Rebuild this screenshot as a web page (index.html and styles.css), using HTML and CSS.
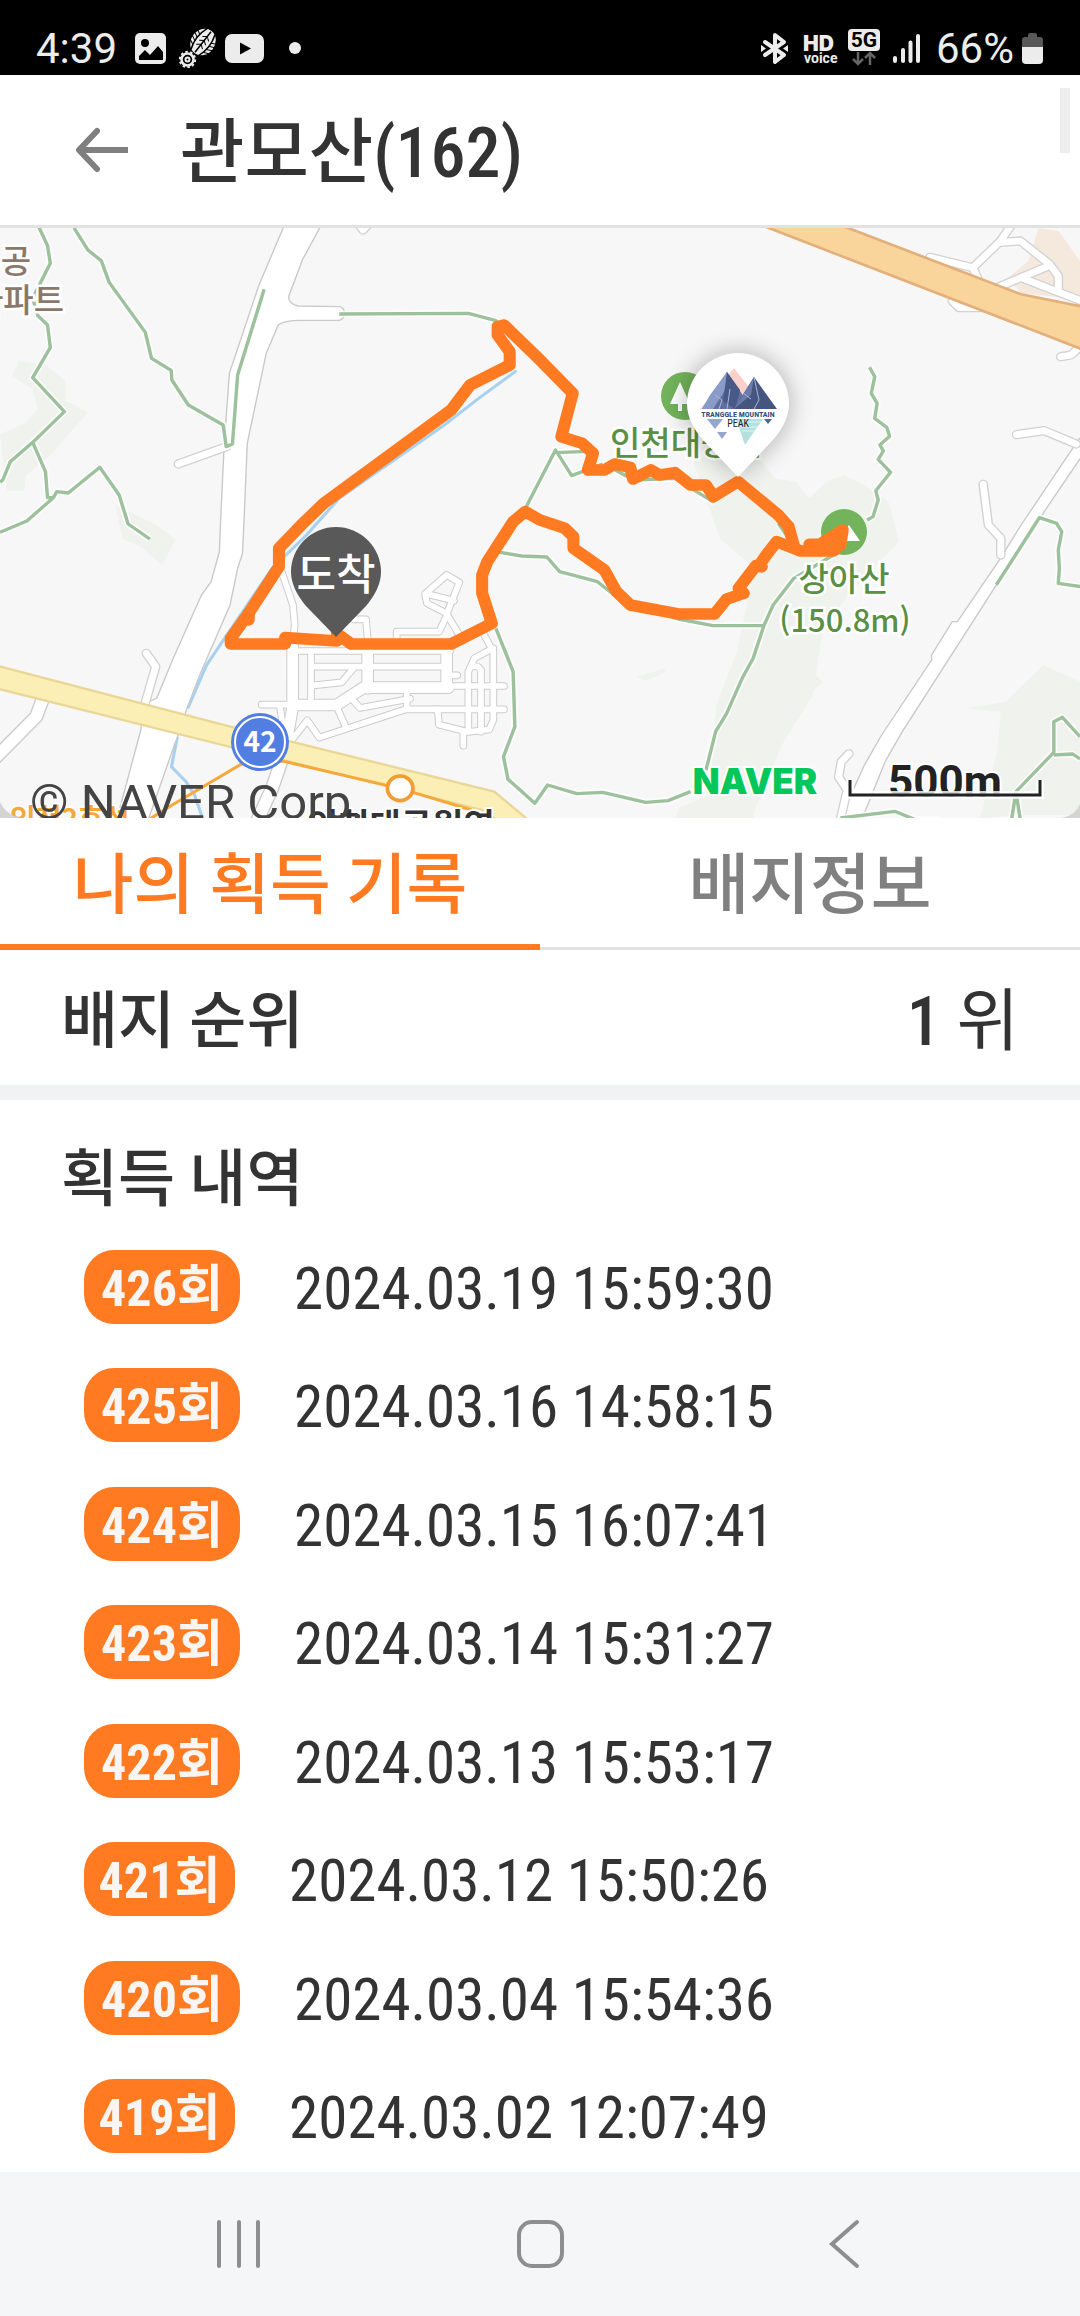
FILE: index.html
```html
<!DOCTYPE html>
<html lang="ko">
<head>
<meta charset="utf-8">
<meta name="viewport" content="width=device-width">
<title>관모산(162)</title>
<link rel="stylesheet" href="styles.css">
</head>
<body>
<div class="screen">
  <div class="status">
    <div class="status-side">
      <span class="status-text">4:39</span>
      <svg class="notices" width="170" height="40" viewBox="132 28 170 40">
        <rect x="136" y="33" width="31" height="31" rx="5" fill="#ececec"/>
        <circle cx="146" cy="43" r="4" fill="#000"/>
        <path d="M140 60v-4l6-6 5 5 8-9 5 6v8z" fill="#000"/>
        <g fill="none" stroke="#ececec">
          <circle cx="188.500" cy="59.500" r="6" stroke-width="2.500"/>
          <circle cx="188.500" cy="59.500" r="7.700" stroke-width="2" stroke-dasharray="2.500 2.340"/>
          <circle cx="188.500" cy="59.500" r="2" stroke-width="2"/>
        </g>
        <g transform="rotate(38 204 42)">
          <ellipse cx="204" cy="42" rx="12" ry="14" fill="#ececec"/>
          <path d="M199 29q-5 13 0 26M209 29q5 13 0 26M204 29v26" fill="none" stroke="#000" stroke-width="1.500"/>
          <path d="M191 35l6 3M191 39l6 3M191 43l6 3M191 47l6 3M217 35l-6 3M217 39l-6 3M217 43l-6 3M217 47l-6 3M200 38l4-3 4 3M200 43l4-3 4 3M200 48l4-3 4 3" fill="none" stroke="#000"/>
        </g>
        <rect x="226" y="34" width="39" height="29" rx="7" fill="#ececec"/>
        <path d="M241 42.500v12l11-6z" fill="#000"/>
        <circle cx="296" cy="48" r="6" fill="#ececec"/>
      </svg>
    </div>
    <div class="status-side">
      <svg class="signals" width="164" height="40" viewBox="754 28 164 40">
        <g fill="none" stroke="#ececec" stroke-width="4" stroke-linecap="round" stroke-linejoin="round">
          <path d="M761 42l19 13-9 7V35l9 7-19 13"/>
        </g>
        <path d="M757 45l5 3.500-5 3.500zM784 45l-5 3.500 5 3.500z" fill="#ececec"/>
        <text x="799" y="51" class="hd">HD</text>
        <text x="800" y="63" class="voice">voice</text>
        <rect x="844" y="29" width="32" height="22" rx="4" fill="#ececec"/>
        <text x="860" y="47" class="fiveg">5G</text>
        <path d="M854 52v12m-5-5l5 5 5-5M866 65V53m-5 5l5-5 5 5" fill="none" stroke="#666" stroke-width="2.500"/>
        <path d="M891 58v3M899 50v11M906.500 42.500V61M914 36v25" stroke="#ececec" stroke-width="4" stroke-linecap="round"/>
      </svg>
      <span class="status-text">66%</span>
      <svg class="battery" width="21" height="32" viewBox="0 0 21 32">
        <path d="M0 14V7q0-3 3-3h3V2q0-2 2-2h5q2 0 2 2v2h3q3 0 3 3v7z" fill="#585858"/>
        <path d="M0 14h21v13q0 4-4 4H4q-4 0-4-4z" fill="#ececec"/>
      </svg>
    </div>
  </div>

  <header class="header">
    <button class="back" aria-label="뒤로">
      <svg width="54" height="46" viewBox="0 0 54 46" fill="none" stroke="#7f7f7f" stroke-width="6">
        <path d="M3 23h50"/><path d="M22 4L4 23l18 19" stroke-linecap="round" stroke-linejoin="round"/>
      </svg>
    </button>
    <h1>관모산(162)</h1>
    <i class="scroll-thumb"></i>
  </header>

  <svg class="map" viewBox="0 228 1080 590" preserveAspectRatio="xMidYMid slice">
    <defs>
      <filter id="shadow" x="-60%" y="-60%" width="220%" height="220%"><feGaussianBlur stdDeviation="13"/></filter>
      <path id="avenues" d="M218 260V440L200 545M215 435H350L430 383H685M443 265V385M680 265V378"/>
      <g id="streets">
        <path d="M218 273H690M273 275V430M273 320H680M273 377l92-10 38-45"/>
        <path d="M400 422l20 22 150-28M560 385v62L298 533l-36-52-47 60M350 440l28 62M560 448H852M680 378H852M690 346h22M125 434h90M180 440l10 70"/>
        <path d="M745 515V335l18-40 52-28-22-42M783 330v185M752 320q30-8 31 20M820 265V480l-12 28-63 8-88-22-4-46M730 515v42M660 480"/>
        <path d="M683 162l-62-32-6-28 65-57 38 22-38 95 42 70M530 235v-20h127l26-53M622 102l80 20M400 178h38l5 60M183 30l36 105 5 60-5 50"/>
      </g>
      <g id="lanes">
        <path d="M518 717l140-52M425 1285l27 40-32 115M1040 -5l14 20 14-15"/>
        <path d="M2700 97l125 31 15 35M2825 128l80-80 30-45M2905 52l58-4 85 70 25 35v45M3040 125l-150 65M2970 160l170 68M2765 228l20 20h80M3080 395l30-5 26-25M2952 629l80-12 93 40M2855 778l15 122 36 40v50M2465 1586l-22 24-8 45 25 40-20 90"/>
      </g>
      <g id="trails">
        <path d="M110 0l28 62 8 53-51 105 15 52 28 28 8 68-51 90 92 102-92 92-65 58-22 55-8 7M95 652l37 88 6 78h17l10-18 33 4 92-77 56 83 26 87 63 45M155 818l-77 70-78 34"/>
        <path d="M215 9l41 67 38 31 23 65 105 150 18 78 57 36 2 29 48 75 101 60 9 65 18-8 15-207 77-257M985 267l375-2 80 22 20 20"/>
        <path d="M1528 845l85-170 47 77 90-35M1613 683l95-4M1760 720l80 45 120-5 110 70 60-45"/>
        <path d="M2525 427l15 28-10 50 17 30-7 45 35 27 8 27-28 26 10 18-15 25 36 39-43 55 7 28-15 50-17 10"/>
        <path d="M2893 1080l125-202 50 17 15 25-10 55 3 55-3 45 66 10"/>
        <path d="M1440 980l75 13 73 3 37 44 110 30 60 50 175 62 100 20h148M2420 990l-115 70-60 80-27 62-31 98-32 60-45 105-32 55-28 115M2260 895l40 60"/>
        <path d="M2005 1700l-65 27-65 5-125-30-75 4-85-26-37 55-78-72-13-68 33-90-5-165-50-130"/>
        <path d="M3136 1535l-51-58-25 13v92l-110 118-12 80M3060 1590l55-3 21 15M2950 1700l12 80M2440 1779l158-20 60 25h70"/>
      </g>
    </defs>

    <rect y="228" width="1080" height="590" fill="#f7f7f7"/>
    <g transform="translate(0 225) scale(.34439 .33333)" fill="none">
      <g fill="#f0f2ed">
        <path d="M55 407l80 15 55 45v60l65 35-110 130-70 60-5 45H20l-20-170 70-30 40-45-15-60-60-40z"/>
        <path d="M335 840l60 30 60 30 55 45-40 75-55-50-60-30z"/>
        <path d="M2010 700l180-20 60 80 60 10 40 50 50-50 50-20 60 30 70 50 30 120-130 140-90 120-30 200-90 150-80 200-10 120h-150l-80-50 20-80 90-40 20-270 60-160 50-250-100-90z" />
        <path d="M2230 1270l60 10 100 90-40 40-70-50-70-10z"/>
        <path d="M1850 1355l80-25 5 10-60 28z"/>
        <path d="M2810 1450l110-20 110-110 106 50v400h-190l-100 10 50-200 10-120z"/>
      </g>
      <path d="M3015 9l60 10 61 90v115l-170-20-40-45 60-50z" fill="#f5e9dd"/>

      <path d="M1500 437l-110 83-100 80-305 220-95 110-100 100-190 290-55 130M515 1535l-17 90 42 45 25 40 23 70" stroke="#a8d1f0" stroke-width="9"/>

      <path d="M826 0L752 180 666 445 655 600 650 680 640 900 637 980 613 1070 585 1110 505 1295 455 1420 410 1440 410 1510 335 1800H425L515 1535 543 1450 580 1350 668 1140 690 1030 704 985 708 900 718 655 773 385 808 300Q820 288 865 286H985Q1000 283 1000 265T985 245L865 243Q838 235 838 215L878 105 928 9V-20z" fill="#fff" stroke="#c9c9c9" stroke-width="4"/>
      <path d="M3150 620l-30 42-155 238-60 100-125 190h-15l-60 100v15l-145 225-50 90-75 170h65l70-180 50-90 270-435 120-185 22-40 118-180z" fill="#fff" stroke="#c9c9c9" stroke-width="4"/>
      <g stroke-linecap="round" stroke-linejoin="round">
        <path d="M125 1420l-20 55L-20 1605M820 1600l-30 90-40 90" stroke="#ccc" stroke-width="42"/>
        <path d="M125 1420l-20 55L-20 1605M820 1600l-30 90-40 90" stroke="#fff" stroke-width="34"/>
        <use href="#lanes" stroke="#d2d2d2" stroke-width="28"/>
        <use href="#lanes" stroke="#fff" stroke-width="20"/>
      </g>
    </g>
    <g transform="translate(220 560) scale(.33333)" fill="none" stroke-linecap="round" stroke-linejoin="round">
      <use href="#avenues" stroke="#ccc" stroke-width="38"/>
      <use href="#streets" stroke="#ccc" stroke-width="23"/>
      <use href="#avenues" stroke="#fff" stroke-width="32"/>
      <use href="#streets" stroke="#fff" stroke-width="17"/>
    </g>
    <g transform="translate(0 225) scale(.34439 .33333)" fill="none">
      <path d="M-10 1322L680 1508 1435 1700 1540 1790H1450L1400 1755 820 1605 -10 1390z" fill="#fcefb5" stroke="#ead798" stroke-width="7"/>
      <path d="M2200 -4L3150 376V246L2965 208 2430 -4z" fill="#f9d59c" stroke="#e3af7b" stroke-width="8"/>

      <g stroke="#fff" stroke-width="20" stroke-linejoin="round" opacity=".8"><use href="#trails"/></g>
      <g stroke="#9dc09d" stroke-width="10" stroke-linejoin="round"><use href="#trails"/></g>

      <path d="M430 1785l70-45 200-122 120-10 340 82 210 65" stroke="#f6a83a" stroke-width="9"/>
      <circle cx="1162" cy="1690" r="37" fill="#fff" stroke="#f19d33" stroke-width="11"/>
    </g>

    <g class="place">
      <circle cx="685" cy="396" r="24" fill="#72b35c"/>
      <path d="M680 382l-10 22h8v7h4v-7h8z" fill="#fff"/>
      <text x="610" y="455">인천대공원</text>
      <circle cx="844" cy="532" r="23" fill="#72b35c"/>
      <path d="M831 541l8-14 5 5 5-7 11 16z" fill="#fff"/>
      <text x="844" y="591" text-anchor="middle">상아산</text>
      <text x="845" y="632" text-anchor="middle" class="height">(150.8m)</text>
    </g>
    <g class="apt">
      <text x="31" y="273" text-anchor="end">주공</text>
      <text x="64" y="312" text-anchor="end">아파트</text>
    </g>

    <g transform="translate(0 225) scale(.34439 .33333)" fill="none" stroke="#ff7a21" stroke-width="35" stroke-linecap="round" stroke-linejoin="round">
      <path d="M978 1248L828 1238V1257H670V1240L722 1165 810 1025V970L875 900 940 835 1310 555 1365 480 1480 420V380L1445 330V305L1463 300 1568 405 1663 505 1630 635 1690 655 1722 685 1707 735H1755L1785 717 1830 727 1838 762 1890 735 1915 750 1960 743 2005 780H2050L2072 815 2143 770 2260 870 2290 905 2306 965"/>
      <path d="M722 1185V1165M2325 978H2420L2440 960 2447 915 2380 958H2350M2325 978L2255 950 2225 990 2205 1020 2212 1025 2195 1022 2145 1090 2160 1105 2110 1122 2075 1167H1970L1830 1140 1790 1100 1755 1035 1665 970V935L1640 910 1568 885 1525 860 1490 890 1415 1010 1400 1050V1105L1428 1195 1310 1257H1020L978 1225"/>
    </g>

    <path d="M738 476C724 454 687 439 687 404a51 51 0 01102 0C789 439 752 454 738 476z" fill="#000" opacity=".3" filter="url(#shadow)"/>
    <path d="M738 477L704 441Q687 422 687 404a51 51 0 01102 0Q789 422 772 441z" fill="#fff"/>
    <g>
      <path d="M700 409l34-41 25 32 9-8-10 17z" fill="#fbd0cb"/>
      <path d="M702 409l25-37 25 37z" fill="#5f6f9f"/>
      <path d="M734 409l20-32 23 32z" fill="#445580"/>
      <path d="M727 372l6 10-9 10-11 17h-11l8-14z" fill="#8b9bc8"/>
      <path d="M727 372l13 18-5 19-12-8z" fill="#485987"/>
      <path d="M754 377l-3 18-17 14z" fill="#6b7ba9"/>
      <path d="M715 395l7 5-3 9M730 389l-3 20M754 377l5 23-5 9M743 393l8 6" fill="none" stroke="#aab6d9"/>
      <path d="M736 419h27l-18 26z" fill="#b6dfe0"/>
      <path d="M737 422h24M740 427h18M742 431h13" stroke="#e2f4f4"/>
      <path d="M707 419h16l-8 10zM717 432h10l-5 7z" fill="#9aa5cf"/>
      <path d="M764 419h8l-4 5z" fill="#52658f"/>
      <text x="738" y="417" class="badge-name">TRANGGLE MOUNTAIN</text>
      <text x="738" y="427" class="badge-peak">PEAK</text>
    </g>

    <path d="M336 637L306 606Q291 588 291 572a45 45 0 0190 0Q381 588 366 606z" fill="#595959"/>
    <text x="336" y="590" class="arrive">도착</text>

    <circle cx="260" cy="742" r="29" fill="#527ee2"/>
    <circle cx="260" cy="742" r="25" fill="none" stroke="#fff" stroke-width="2"/>
    <text x="260" y="752" class="route-no">42</text>

    <text x="10" y="829" class="line-name">인천2호선</text>
    <text x="307" y="838" class="station">인천대공원역</text>
    <text x="30" y="819" class="credit">© NAVER Corp.</text>
    <text x="755" y="794" class="naver">NAVER</text>
    <text x="945" y="797" class="scale">500m</text>
    <path d="M850 780v15h190v-15" fill="none" stroke="#fff" stroke-width="8" opacity=".8"/>
    <path d="M850 780v15h190v-15" fill="none" stroke="#222" stroke-width="3"/>
    <path d="M0 802q5 12 20 16H0zM1080 804q-4 11-18 14h18z" fill="#d4d4d4"/>
  </svg>

  <nav class="tabs">
    <button class="tab active">나의 획득 기록</button>
    <button class="tab">배지정보</button>
  </nav>

  <section class="rank">
    <h2>배지 순위</h2>
    <p><b>1</b> 위</p>
  </section>

  <section class="history">
    <h2>획득 내역</h2>
    <ul>
      <li><span class="count">426회</span><time>2024.03.19 15:59:30</time></li>
      <li><span class="count">425회</span><time>2024.03.16 14:58:15</time></li>
      <li><span class="count">424회</span><time>2024.03.15 16:07:41</time></li>
      <li><span class="count">423회</span><time>2024.03.14 15:31:27</time></li>
      <li><span class="count">422회</span><time>2024.03.13 15:53:17</time></li>
      <li><span class="count narrow">421회</span><time>2024.03.12 15:50:26</time></li>
      <li><span class="count">420회</span><time>2024.03.04 15:54:36</time></li>
      <li><span class="count narrow">419회</span><time>2024.03.02 12:07:49</time></li>
    </ul>
  </section>

  <footer class="system">
    <button aria-label="최근 앱"><svg width="48" height="50" viewBox="0 0 48 50"><path d="M5 3v44M25 3v44M44 3v44"/></svg></button>
    <button aria-label="홈"><svg width="48" height="50" viewBox="0 0 48 50"><rect x="3" y="3" width="43" height="44" rx="13"/></svg></button>
    <button aria-label="이전"><svg width="48" height="50" viewBox="0 0 48 50"><path d="M39 3L14 25l25 22"/></svg></button>
  </footer>
</div>
</body>
</html>
```
FILE: styles.css
```css
* { box-sizing: border-box; }
body { margin: 0; background: #fff; color: #333; font-family: "Roboto Condensed", "Noto Sans CJK KR", sans-serif; }
h1, h2, p, ul { margin: 0; padding: 0; }
button { border: 0; padding: 0; background: none; font: inherit; color: inherit; }
svg { display: block; }

.screen { display: flex; flex-direction: column; min-height: 100vh; }

.status { height: 75px; padding: 20px 37px 0 36px; background: #000; color: #ececec; display: flex; justify-content: space-between; align-items: flex-start; }
.status-side { display: flex; align-items: flex-start; }
.status-text { font: 42px/58px Roboto, sans-serif; }
.notices { margin: 8px 0 0 14px; }
.signals { margin: 8px 14px 0 0; }
.battery { margin: 13px 0 0 8px; }
.hd { font: 900 21px Inter, sans-serif; fill: #ececec; }
.voice { font: 700 14px Roboto, sans-serif; fill: #ececec; }
.fiveg { font: 700 21px Roboto, sans-serif; text-anchor: middle; fill: #000; }

.header { position: relative; height: 153px; padding: 6px 75px 0; display: flex; align-items: center; gap: 51px; border-bottom: 3px solid #e2e2e2; }
.header h1 { font-size: 70px; font-weight: 500; line-height: 100px; }
.back { padding-bottom: 6px; }
.scroll-thumb { position: absolute; right: 10px; top: 13px; width: 10px; height: 65px; background: #eee; }

.map { width: 100%; height: 590px; flex: none; font-family: "Noto Sans CJK KR", sans-serif; }
.place text { font-size: 33px; font-weight: 500; fill: #5a8f45; stroke: #fff; stroke-width: 5px; paint-order: stroke; }
.place .height { font-size: 31px; }
.apt text { font-size: 33px; font-weight: 500; fill: #8c786b; stroke: #fff; stroke-width: 5px; paint-order: stroke; }
.arrive { font-size: 43px; font-weight: 500; fill: #fff; text-anchor: middle; }
.route-no { font-size: 28px; font-weight: 700; fill: #fff; text-anchor: middle; }
.line-name { font-size: 28px; font-weight: 700; fill: #f6a83a; stroke: #fff; stroke-width: 4px; paint-order: stroke; }
.station { font-size: 34px; font-weight: 700; fill: #333; stroke: #fff; stroke-width: 4px; paint-order: stroke; }
.credit { font: 49px Roboto, sans-serif; fill: #444; }
.naver { font: 900 35px Inter, sans-serif; fill: #03c75a; stroke: #fff; stroke-width: 4px; paint-order: stroke; text-anchor: middle; }
.scale { font: 700 44px Roboto, sans-serif; fill: #222; stroke: #fff; stroke-width: 4px; paint-order: stroke; text-anchor: middle; }
.badge-name { font: 700 8px "Roboto Condensed", sans-serif; fill: #34507d; text-anchor: middle; }
.badge-peak { font: 10px "Roboto Condensed", sans-serif; fill: #222; text-anchor: middle; }

.tabs { display: grid; grid-template-columns: 1fr 1fr; height: 132px; }
.tab { font-size: 66px; font-weight: 500; line-height: 100px; color: #808080; border-bottom: 3px solid #e2e2e2; padding: 9px 0 3px; }
.tab.active { color: #ff7a21; border-bottom: 6px solid #ff7a21; padding-bottom: 0; }

.rank { height: 150px; padding: 8px 61px 0; display: flex; justify-content: space-between; align-items: center; border-bottom: 15px solid #f0f2f4; }
h2 { font-size: 62px; font-weight: 500; line-height: 90px; }
.rank p { font-size: 68px; line-height: 90px; }
.rank b { font-weight: 500; }

.history { flex: 1; padding: 35px 61px 19px; display: flex; flex-direction: column; gap: 25px; }
.history ul { flex: 1; padding-left: 23px; list-style: none; display: flex; flex-direction: column; justify-content: space-between; }
.history li { display: flex; align-items: center; gap: 54px; height: 74px; }
.count { width: 156px; height: 74px; border-radius: 30px; background: #ff7a21; color: #f8f5f2; font-size: 50px; font-weight: 700; line-height: 78px; text-align: center; }
.count.narrow { width: 151px; }
time { font-size: 59px; line-height: 70px; padding-top: 4px; }

.system { height: 144px; background: #f5f6f8; display: flex; justify-content: center; align-items: center; gap: 254px; }
.system svg { fill: none; stroke: #8e8e8e; stroke-width: 4; stroke-linecap: round; }
```
